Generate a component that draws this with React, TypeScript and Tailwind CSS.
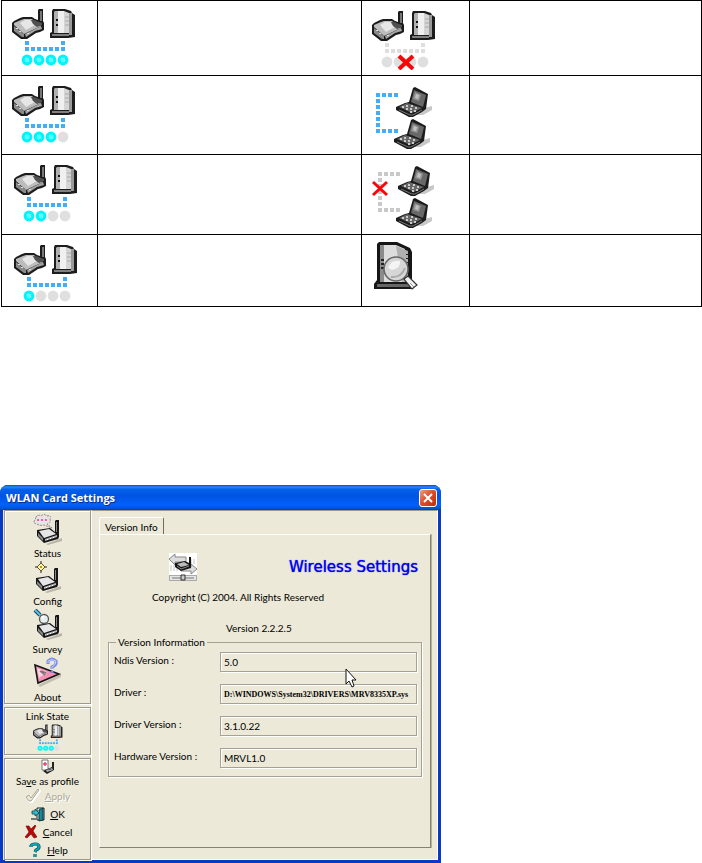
import React from 'react';

const Router: React.FC = () => (
  <g>
    <path d="M0 14 L2 12 L8 9 L11 8 L20 8 L23 10 L26 11 L26 1 L27 0 L31 0 L31 12 L32 14 L32 21 L28 23 L24 24 L15 30 L9 30 L0 23Z" fill="#1c1c1c" />
    <path d="M2 14 L9 11 L12 10 L20 10 L23 13 L29 17 L12 25 L2 16Z" fill="#bdbdbd" />
    <path d="M8 14 L13 11 L18 11 L23 16 L14 21Z" fill="#e6e6e6" />
    <path d="M2 17 L12 25 L12 28 L10 28 L2 22Z" fill="#8a8a8a" />
    <path d="M13 25 L29 17 L30 20 L23 22 L14 28Z" fill="#a4a4a4" />
    <path d="M4 19h2v1h-2z M7 22h2v1h-2z M15 24h2v1h-2z" fill="#ddd" />
    <path d="M28 2 H30 V12 H28Z" fill="#777" />
    <path d="M19 11 L22 11 L27 13 L30 14 L30 16 L25 18 L21 15Z" fill="#505050" />
  </g>
);

const Server: React.FC = () => (
  <g>
    <path d="M2 2 L3 0 L15 0 L21 2 L22 4 L25 6 L25 28 L18 29 L0 29 L0 24 L2 23Z" fill="#1c1c1c" />
    <path d="M4 3 L5 2 L11 2 V24 H4Z" fill="#b0b0b0" />
    <path d="M8 2 L14 2 L14 24 L8 24Z" fill="#f0f0f0" />
    <path d="M14 2 L19 4 L19 24 H14Z" fill="#d4d4d4" />
    <path d="M19 4 H22 V26 H19Z" fill="#999" />
    <path d="M2 25 H19 V27 H2Z" fill="#808080" />
    <path d="M6 10 H8 V12 H6Z M6 15 H8 V17 H6Z" fill="#111" />
    <path d="M15 8 H19 M15 12 H19 M15 16 H19" stroke="#aaa" strokeWidth="1" />
  </g>
);

const Cross: React.FC<{ x: number; y: number; width: number }> = ({ x, y, width }) => (
  <path
    transform={`translate(${x} ${y})`}
    d="M0 0 L14 13 M14 0 L0 13"
    stroke="#f60808"
    strokeWidth={width}
  />
);

const SignalIcon: React.FC<{ level: number; label: string; className?: string }> = ({ level, label, className = 'h-[60px] w-16' }) => {
  const color = level > 0 ? '#43aef7' : '#dedede';
  return (
    <svg viewBox="0 0 64 60" className={className} role="img" aria-label={label}>
      <g transform="translate(0 1)"><Router /></g>
      <g transform="translate(38 1)"><Server /></g>
      <g fill={color}>
        <rect x="13" y="33" width="4" height="4" />
        <rect x="49" y="33" width="4" height="4" />
        {[0, 1, 2, 3, 4, 5, 6].map((i) => (
          <rect key={i} x={13 + i * 6} y="39" width="4" height="4" />
        ))}
      </g>
      {[0, 1, 2, 3].map((i) => (
        <g key={i}>
          <circle cx={15 + i * 12} cy="52" r="5.4" fill={i < level ? '#00f4fc' : '#dfdfdf'} />
          {i < level && <circle cx={15 + i * 12} cy="52" r="2.4" fill="#5ff" />}
          {i < level && <path d={`M${13 + i * 12} 50h1v1h-1z M${16 + i * 12} 52h1v1h-1z`} fill="#b8ffff" />}
        </g>
      ))}
      {level === 0 && <Cross x={27} y={46} width={4} />}
    </svg>
  );
};

const Laptop: React.FC = () => (
  <g>
    <path d="M25 22 L36 19 L36 23 L27 28 L19 28Z" fill="#c8c8c8" />
    <path d="M13 15 L17 1 L19 0 L32 7 L30 22 L26 25 L17 30 L13 30 L0 23 L0 20 L9 16Z" fill="#1c1c1c" />
    <path d="M18 3 L30 8 L27 20 L15 15Z" fill="#686868" />
    <path d="M19 5 L25 8 L23 14 L17 12Z" fill="#959595" />
    <path d="M20 7 L23 8 L22 12 L19 11Z" fill="#c2c2c2" />
    <path d="M3 20 L11 16 L26 21 L16 26Z" fill="#666" />
    <path d="M6 19h2v2h-2z M10 18h2v2h-2z M15 18h2v2h-2z M19 20h2v2h-2z M10 21h2v2h-2z M14 21h2v2h-2z M14 24h2v2h-2z M18 23h2v2h-2z" fill="#ccc" />
    <path d="M3 23 L14 28 L17 28 L26 23" stroke="#777" strokeWidth="1" fill="none" />
  </g>
);

const PeerIcon: React.FC<{ connected: boolean; label: string }> = ({ connected, label }) => (
  <svg viewBox="0 0 64 66" className="h-[66px] w-16 overflow-visible" role="img" aria-label={label}>
    <g fill={connected ? '#43aef7' : '#c9c9c9'}>
      {[0, 1, 2, 3].map((i) => <rect key={`t${i}`} x={4 + i * 6} y="8" width="4" height="4" />)}
      {[1, 2, 3, 4, 5].map((i) => <rect key={`v${i}`} x="4" y={8 + i * 6} width="4" height="4" />)}
      {[0, 1, 2, 3].map((i) => <rect key={`b${i}`} x={4 + i * 6} y="44" width="4" height="4" />)}
    </g>
    <g transform="translate(24 2)"><Laptop /></g>
    <g transform="translate(22 34)"><Laptop /></g>
    {!connected && <Cross x={-1} y={18} width={3} />}
  </svg>
);

const ScanIcon: React.FC = () => (
  <svg viewBox="0 0 44 48" className="h-12 w-11" role="img" aria-label="Scanning">
    <path d="M3 2 L5 0 H23 L36 6 L38 10 V38 L40 46 L38 47 H0 V42 L3 38Z" fill="#161616" />
    <path d="M6 3 H13 V40 H6Z" fill="#8c8c8c" />
    <path d="M10 3 H22 L31 7 V40 H10Z" fill="#ddd" />
    <path d="M22 4 L34 9 V40 H28Z" fill="#b0b0b0" />
    <path d="M3 42 H36 V45 H3Z" fill="#666" />
    <path d="M7 17h3v2h-3z M7 21h3v2h-3z M7 25h3v2h-3z M32 12h3v1h-3z M32 16h3v1h-3z M32 20h3v1h-3z" fill="#222" />
    <circle cx="22" cy="27" r="12" fill="#d6d6d6" stroke="#666" strokeWidth="1.6" />
    <path d="M14 26 Q17 17 26 19 Q27 26 18 28Z" fill="#f4f4f4" />
    <path d="M17 35 Q27 36 31 26" stroke="#aaa" strokeWidth="2" fill="none" />
    <path d="M30 37 L34 34 L43 43 L38 47Z" fill="#f1f1f1" stroke="#333" strokeWidth="1.2" />
    <path d="M36 41 L40 45" stroke="#999" strokeWidth="1" />
  </svg>
);

const Modem: React.FC = () => (
  <g>
    <path d="M10 30 L26 24 L26 27 L12 31Z" fill="#b9b6a8" />
    <path d="M1 16 L14 14 L19 18 L19 7 L20 6 H23 V23 L22 25 L8 29 L1 22Z" fill="#161616" />
    <path d="M3 17 L13 15 L20 20 L8 24Z" fill="#e6e6e6" />
    <path d="M2 19 L7 24 L7 27 L2 22Z" fill="#888" />
    <path d="M9 25 L21 21 L21 23 L9 27Z" fill="#b4b4b4" />
    <path d="M11 25h1v1h-1z M14 24h1v1h-1z M17 23h1v1h-1z" fill="#fff" />
    <path d="M20 8 H21 V18 H20Z" fill="#888" />
  </g>
);

const StatusIcon: React.FC = () => (
  <svg viewBox="0 0 32 32" className="h-8 w-8" aria-hidden="true">
    <g transform="translate(4 1)"><Modem /></g>
    <path d="M4 4 Q6 1 9 3 Q12 0 15 3 Q20 2 18 6 Q19 10 15 11 L20 15 L12 12 Q8 13 5 11 Q0 10 3 7Z" fill="#e9e4e4" stroke="#8e8484" strokeWidth="1" strokeDasharray="2 1" />
    <path d="M5 6h2v2h-2z M9 6h2v2h-2z M13 6h2v2h-2z" fill="#f45fae" />
  </svg>
);

const ConfigIcon: React.FC = () => (
  <svg viewBox="0 0 32 32" className="h-8 w-8" aria-hidden="true">
    <g transform="translate(3 1)"><Modem /></g>
    <path d="M9 0 V12 M3 6 H15" stroke="#222" strokeWidth="1" />
    <path d="M5 6 L9 2 L13 6 L9 10Z" fill="#fff5ab" stroke="#5d5522" strokeWidth="1" />
    <path d="M8 5h2v2h-2z" fill="#bd9b00" />
  </svg>
);

const SurveyIcon: React.FC = () => (
  <svg viewBox="0 0 32 32" className="h-8 w-8" aria-hidden="true">
    <g transform="translate(4 0)"><Modem /></g>
    <path d="M3 1 L8 6" stroke="#174b65" strokeWidth="4" />
    <path d="M3 1 L8 6" stroke="#5ebde8" strokeWidth="2" />
    <circle cx="12" cy="10" r="4.5" fill="#e6eeee" stroke="#555" strokeWidth="1.3" />
    <path d="M10 9 L12 7" stroke="#fff" strokeWidth="2" />
  </svg>
);

const AboutIcon: React.FC = () => (
  <svg viewBox="0 0 32 32" className="h-8 w-8" aria-hidden="true">
    <path d="M6 28 L29 17 L29 20 L8 30Z" fill="#c4c0b1" />
    <path d="M3 8 L27 17 L6 26Z" fill="#f390b4" stroke="#161616" strokeWidth="1.6" />
    <path d="M5 11 L15 15 L7 21Z" fill="#fcd3df" />
    <path d="M8 14 L13 18 M9 14 L14 16" stroke="#777" strokeWidth="1.6" />
    <path d="M16 7 V4 Q20 0 24 4 Q25 8 20 10 V12 M20 14 V16" fill="none" stroke="#7888eb" strokeWidth="3" />
    <path d="M16 6 V4 Q20 1 24 4 Q24 8 20 10 V12" fill="none" stroke="#c8d2ff" strokeWidth="1" />
  </svg>
);

const ProfileIcon: React.FC = () => (
  <svg viewBox="0 0 16 16" className="h-4 w-4" aria-hidden="true">
    <path d="M2 1 H8 V11 H2Z" fill="#fff" stroke="#777" />
    <path d="M5 3 V7 M3 5 H7" stroke="#e74773" strokeWidth="1.5" />
    <path d="M5 11 L12 8 V3 H14 V11 L7 15 L3 12Z" fill="#222" />
    <path d="M6 11 L12 9 L13 11 L7 13Z" fill="#aaa" />
    <path d="M8 9h3v2h-3z" fill="#666" />
  </svg>
);

const ApplyIcon: React.FC = () => (
  <svg viewBox="0 0 16 16" className="h-4 w-4" aria-hidden="true">
    <path d="M2 10 L5 8 L7 11 L14 2 L15 3 L7 14 L5 14Z" fill="#e4e0d0" stroke="#fff" strokeWidth="2" />
    <path d="M1 9 L4 7 L6 10 L13 1 L14 2 L6 13 L4 13Z" fill="#ece9d8" stroke="#aaa797" strokeWidth="1" />
  </svg>
);

const ExitIcon: React.FC = () => (
  <svg viewBox="0 0 16 16" className="h-4 w-4" aria-hidden="true">
    <path d="M7 2 H14 V14 H7Z" fill="#d5f4f4" stroke="#152226" />
    <path d="M9 4 L13 2 V14 L9 15Z" fill="#198897" stroke="#10343a" />
    <path d="M2 5 H5 V3 L9 7 L5 10 V8 H2Z" fill="#29c2cf" stroke="#143b43" strokeWidth="0.8" />
    <path d="M1 12 H7 V14 H1Z" fill="#777" />
  </svg>
);

const CancelIcon: React.FC = () => (
  <svg viewBox="0 0 16 16" className="h-4 w-4" aria-hidden="true">
    <path d="M3 2 L6 2 L8 5 L12 1 L13 2 L10 7 L14 13 L11 14 L8 10 L4 14 L2 13 L6 8Z" fill="#b70b0b" stroke="#760000" strokeWidth="0.6" />
  </svg>
);

const HelpIcon: React.FC = () => (
  <svg viewBox="0 0 16 16" className="h-4 w-4" aria-hidden="true">
    <path d="M4 5 V4 Q5 2 8 2 Q12 2 12 5 Q12 7 9 8 L8 10 M8 12 V15" fill="none" stroke="#07525e" strokeWidth="3.2" />
    <path d="M4 5 V4 Q5 2 8 2 Q12 2 12 5 Q12 7 9 8 L8 10 M8 12 V15" fill="none" stroke="#10a5b5" strokeWidth="1.8" />
  </svg>
);

const SwitchIcon: React.FC = () => (
  <svg viewBox="0 0 28 28" className="h-7 w-7" aria-hidden="true">
    <path d="M0 0 H28 V28 H0Z" fill="#fff" />
    <path d="M2 12v6 M5 12v6 M8 13v5 M22 6v5 M25 6v5" stroke="#c4c4c4" strokeWidth="1" />
    <path d="M0 6 L6 1 V4 H17 V9 H6 V12Z" fill="#ddd" stroke="#888" strokeWidth="1" />
    <path d="M12 14 H22 V11 L28 16 L22 21 V18 H12Z" fill="#ddd" stroke="#888" strokeWidth="1" />
    <path d="M6 10 L16 8 L20 10 V4 H22 V15 L12 18 L6 14Z" fill="#161616" />
    <path d="M8 11 L15 9 L20 12 L12 14Z" fill="#bbb" />
    <path d="M8 13 L12 16 L20 13" stroke="#888" fill="none" />
    <path d="M0 22 H28 V28 H0Z" fill="#aaa" />
    <path d="M1 23 H27 V27 H1Z" fill="#e5e5e5" />
    <path d="M3 25 H25" stroke="#777" />
    <path d="M12 22 H16 V27 H12Z" fill="#ccc" stroke="#333" strokeWidth="1" />
  </svg>
);

const statusRows = [
  {
    height: 'h-[75px]',
    left: <SignalIcon level={4} label="Excellent signal" />,
    leftPad: 'pt-[7px] pl-2.5',
    right: <SignalIcon level={0} label="Not connected" />,
    rightPad: 'pt-[9px] pl-2.5',
  },
  {
    height: 'h-[79px]',
    left: <SignalIcon level={3} label="Good signal" />,
    leftPad: 'pt-[9px] pl-2.5',
    right: <PeerIcon connected label="Ad-hoc connected" />,
    rightPad: 'pt-[9px] pl-2.5',
  },
  {
    height: 'h-20',
    left: <SignalIcon level={2} label="Fair signal" />,
    leftPad: 'pt-[9px] pl-3',
    right: <PeerIcon connected={false} label="Ad-hoc disconnected" />,
    rightPad: 'pt-[9px] pl-3',
  },
  {
    height: 'h-[72px]',
    left: <SignalIcon level={1} label="Poor signal" />,
    leftPad: 'pt-[9px] pl-3',
    right: <ScanIcon />,
    rightPad: 'pt-[7px] pl-3',
  },
];

const pages = [
  { name: 'Status', icon: <StatusIcon /> },
  { name: 'Config', icon: <ConfigIcon /> },
  { name: 'Survey', icon: <SurveyIcon /> },
  { name: 'About', icon: <AboutIcon /> },
];

const fields = [
  { id: 'ndis', label: 'Ndis Version :', value: '5.0', font: 'text-[10px]' },
  { id: 'driver', label: 'Driver :', value: 'D:\\WINDOWS\\System32\\DRIVERS\\MRV8335XP.sys', font: "font-['Liberation_Serif',serif] text-[8px] font-bold" },
  { id: 'driver-version', label: 'Driver Version :', value: '3.1.0.22', font: 'text-[10px]' },
  { id: 'hardware', label: 'Hardware Version :', value: 'MRVL1.0', font: 'text-[10px]' },
];

const Panel: React.FC<{ children: React.ReactNode; className?: string }> = ({ children, className = '' }) => (
  <div className={`flex flex-col items-center border border-[#9d9a8b] shadow-[inset_1px_1px_0_#fff,1px_1px_0_#fff] ${className}`}>
    {children}
  </div>
);

const ActionButton: React.FC<{ icon: React.ReactNode; disabled?: boolean; children: React.ReactNode }> = ({ icon, disabled, children }) => (
  <button
    disabled={disabled}
    className="flex h-[18px] items-center gap-1 leading-4 disabled:text-[#aca899] disabled:[text-shadow:1px_1px_0_#fff]"
  >
    {icon}
    <span>{children}</span>
  </button>
);

const StatusTable: React.FC = () => (
  <div className="pl-px">
    <table className="w-full table-fixed border-collapse">
      <colgroup>
        <col className="w-24" />
        <col className="w-[264px]" />
        <col className="w-[108px]" />
        <col />
      </colgroup>
      <tbody>
        {statusRows.map((row, i) => (
          <tr key={i} className={row.height}>
            <td className={`border border-black align-top ${row.leftPad}`}>{row.left}</td>
            <td className="border border-black" />
            <td className={`border border-black align-top ${row.rightPad}`}>{row.right}</td>
            <td className="border border-black" />
          </tr>
        ))}
      </tbody>
    </table>
  </div>
);

const SettingsWindow: React.FC = () => (
  <section className="w-full max-w-[441px] rounded-t-lg border-x-[3px] border-b-[3px] border-[#0839c4] bg-[#0839c4] font-['Lato','Liberation_Sans',sans-serif] text-[10px] text-black">
    <header className="-mx-[3px] flex h-[25px] items-center justify-between rounded-t-lg bg-[linear-gradient(#0b4bc5_0%,#2588f6_8%,#0560ea_18%,#0054e3_45%,#0061fb_80%,#0052d8_94%,#003bb1_100%)] pt-px pr-1 pl-1.5">
      <h1 className="font-['Open_Sans',sans-serif] text-[11px] font-bold text-white [text-shadow:1px_1px_0_#0a2f83]">WLAN Card Settings</h1>
      <button aria-label="Close" className="flex size-[18px] items-center justify-center rounded-[3px] border border-white bg-[linear-gradient(135deg,#ee9a80,#dc4a26_50%,#bd3009)]">
        <svg viewBox="0 0 10 10" className="size-2.5" aria-hidden="true">
          <path d="M1 1 L9 9 M9 1 L1 9" stroke="#fff" strokeWidth="2" />
        </svg>
      </button>
    </header>
    <div className="flex bg-[#ece9d8]">
      <nav className="flex w-[88px] shrink-0 flex-col gap-[3px] pl-px">
        <Panel className="h-[194px] pt-0.5">
          {pages.map((page) => (
            <button key={page.name} className="flex h-12 flex-col items-center leading-4">
              {page.icon}
              {page.name}
            </button>
          ))}
        </Panel>
        <Panel className="h-12">
          <span className="leading-4">Link State</span>
          <SignalIcon level={3} label="Link state" className="h-7 w-[30px]" />
        </Panel>
        <Panel>
          <button className="flex flex-col items-center leading-3">
            <ProfileIcon />
            <span>Sa<u>v</u>e as profile</span>
          </button>
          <ActionButton icon={<ApplyIcon />} disabled><u>A</u>pply</ActionButton>
          <ActionButton icon={<ExitIcon />}><u>O</u>K</ActionButton>
          <ActionButton icon={<CancelIcon />}><u>C</u>ancel</ActionButton>
          <ActionButton icon={<HelpIcon />}><u>H</u>elp</ActionButton>
        </Panel>
      </nav>
      <main className="flex min-w-0 flex-1 flex-col border border-t-[#9d9a8b] border-r-white border-b-white border-l-white pt-1.5 pr-1.5 pb-[11px] pl-[7px]">
        <div role="tablist" className="flex">
          <button role="tab" aria-selected="true" className="-mb-px h-[18px] rounded-t-[2px] border-t border-r border-l border-t-white border-r-[#6f6d60] border-l-white bg-[#ece9d8] px-[5px] leading-4">
            Version Info
          </button>
        </div>
        <div role="tabpanel" className="flex-1 border border-t-white border-r-[#85826f] border-b-[#85826f] border-l-white pt-[18px] pr-2 pl-2 shadow-[1px_0_0_#b5b2a3]">
          <div className="flex items-center justify-between pr-1 pl-[61px]">
            <SwitchIcon />
            <h2 className="font-['DejaVu_Sans',sans-serif] text-[15px] leading-5 text-[#0000f4] [text-shadow:0_0_1px_#0000f4]">Wireless Settings</h2>
          </div>
          <p className="mt-2 pl-11 leading-4">Copyright (C) 2004. All Rights Reserved</p>
          <p className="mt-[15px] pl-[118px] leading-4">Version 2.2.2.5</p>
          <fieldset className="relative border border-[#a5a293] pr-1 pb-2 pl-[5px] shadow-[inset_1px_0_0_#fff,1px_1px_0_#fff]">
            <legend className="ml-0.5 px-0.5 leading-3">Version Information</legend>
            <div className="flex flex-col gap-3 pt-1">
              {fields.map((field) => (
                <div key={field.id} className="flex h-5 items-center">
                  <label htmlFor={field.id} className="w-[106px] shrink-0 pb-1 leading-4">{field.label}</label>
                  <input
                    id={field.id}
                    readOnly
                    value={field.value}
                    className={`h-5 min-w-0 flex-1 border border-[#a5a293] px-[3px] shadow-[inset_1px_1px_0_#fff,1px_1px_0_#fff] outline-none ${field.font}`}
                  />
                </div>
              ))}
            </div>
            <svg viewBox="0 0 12 20" className="absolute top-5 left-[236px] h-5 w-3" aria-hidden="true">
              <path d="M1 1 V16 L4 13 L7 19 L9 18 L7 12 H11Z" fill="#fff" stroke="#111" strokeWidth="1" />
            </svg>
          </fieldset>
        </div>
      </main>
    </div>
  </section>
);

export default function App() {
  return (
    <div className="bg-white">
      <StatusTable />
      <div className="pt-[178px]">
        <SettingsWindow />
      </div>
    </div>
  );
}
